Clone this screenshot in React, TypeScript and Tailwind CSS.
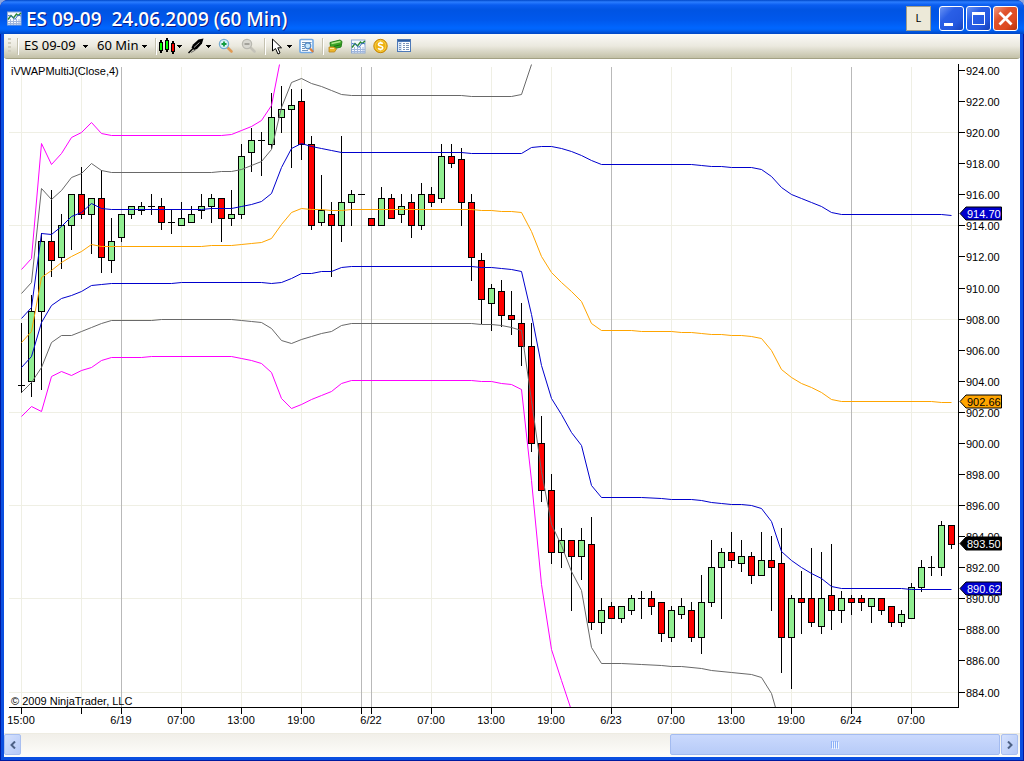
import type { ReactNode } from 'react'

type Kind = 'up' | 'down' | 'flat'
// high, body top, body bottom, low, all in plot coordinates
type Bar = [Kind, number, number, number, number]
type Point = [number, number]

const BARS: Bar[] = [
  ['flat', 323, 385, 385, 392],
  ['up', 295, 311, 381, 396],
  ['up', 233, 241, 311, 389],
  ['down', 190, 241, 260, 276],
  ['up', 214, 225, 257, 268],
  ['up', 194, 194, 225, 249],
  ['down', 167, 194, 214, 218],
  ['up', 198, 198, 214, 253],
  ['down', 170, 198, 257, 272],
  ['up', 218, 241, 260, 272],
  ['up', 214, 214, 237, 241],
  ['up', 206, 206, 214, 218],
  ['up', 202, 206, 210, 214],
  ['flat', 194, 206, 206, 214],
  ['down', 198, 206, 222, 229],
  ['flat', 209, 222, 222, 233],
  ['up', 202, 218, 225, 225],
  ['up', 206, 214, 222, 222],
  ['up', 194, 206, 210, 218],
  ['up', 194, 198, 206, 222],
  ['down', 198, 198, 218, 241],
  ['up', 190, 214, 218, 225],
  ['up', 144, 156, 214, 218],
  ['up', 128, 140, 152, 171],
  ['flat', 132, 140, 140, 175],
  ['up', 93, 117, 144, 148],
  ['up', 86, 109, 117, 132],
  ['up', 89, 105, 109, 167],
  ['down', 89, 101, 144, 159],
  ['down', 136, 144, 225, 229],
  ['up', 175, 210, 222, 225],
  ['down', 202, 214, 225, 276],
  ['up', 136, 202, 225, 241],
  ['up', 190, 194, 202, 225],
  ['flat', 194, 194, 194, 194],
  ['down', 218, 218, 225, 225],
  ['up', 187, 198, 225, 225],
  ['down', 194, 198, 218, 218],
  ['up', 194, 206, 214, 222],
  ['down', 194, 202, 225, 237],
  ['up', 183, 194, 225, 229],
  ['down', 187, 194, 202, 206],
  ['up', 144, 156, 198, 202],
  ['down', 144, 156, 163, 167],
  ['down', 148, 159, 202, 225],
  ['down', 194, 202, 257, 280],
  ['down', 253, 260, 299, 323],
  ['up', 284, 288, 303, 330],
  ['down', 280, 291, 315, 326],
  ['down', 291, 315, 319, 334],
  ['down', 303, 323, 346, 365],
  ['down', 323, 346, 443, 451],
  ['down', 416, 443, 490, 501],
  ['down', 474, 490, 552, 563],
  ['up', 528, 540, 552, 567],
  ['down', 540, 540, 556, 610],
  ['up', 528, 540, 556, 579],
  ['down', 517, 544, 622, 629],
  ['up', 598, 610, 622, 633],
  ['down', 602, 606, 618, 618],
  ['up', 606, 606, 618, 622],
  ['up', 595, 598, 610, 614],
  ['flat', 591, 598, 598, 618],
  ['down', 591, 598, 606, 614],
  ['down', 602, 602, 633, 641],
  ['up', 606, 610, 637, 641],
  ['up', 598, 606, 614, 618],
  ['down', 602, 610, 637, 641],
  ['up', 575, 602, 637, 653],
  ['up', 540, 567, 602, 606],
  ['up', 548, 552, 567, 618],
  ['down', 532, 552, 560, 567],
  ['up', 540, 556, 563, 571],
  ['down', 552, 556, 575, 583],
  ['up', 532, 560, 575, 575],
  ['down', 536, 560, 567, 610],
  ['down', 528, 563, 637, 672],
  ['up', 595, 598, 637, 688],
  ['down', 571, 598, 602, 633],
  ['down', 548, 598, 622, 626],
  ['up', 552, 598, 626, 633],
  ['down', 544, 595, 610, 629],
  ['up', 591, 598, 610, 622],
  ['down', 595, 598, 602, 614],
  ['down', 595, 598, 602, 610],
  ['up', 598, 598, 606, 622],
  ['down', 598, 598, 610, 614],
  ['down', 606, 606, 622, 626],
  ['up', 610, 614, 622, 626],
  ['up', 583, 587, 618, 618],
  ['up', 560, 567, 587, 591],
  ['flat', 556, 567, 567, 575],
  ['up', 521, 525, 567, 575],
  ['down', 525, 525, 544, 548],
]

const BANDS: { color: string; points: Point[] }[] = [
  {
    color: '#f0f',
    points: [
      [21, 269], [31, 258], [41, 143], [51, 164], [61, 153], [71, 137], [81, 132], [91, 122], [101, 133],
      [111, 135], [221, 135], [231, 134], [241, 130], [251, 126], [261, 120], [271, 105], [279, 64],
    ],
  },
  {
    color: '#696969',
    points: [
      [21, 293], [31, 282], [41, 188], [51, 199], [61, 190], [71, 177], [81, 173], [91, 163], [101, 170],
      [111, 172], [211, 172], [221, 171], [231, 171], [241, 169], [251, 165], [261, 161], [271, 149],
      [281, 107], [291, 82], [301, 78], [311, 83], [321, 86], [331, 90], [341, 94], [351, 95], [461, 95],
      [471, 96], [511, 96], [521, 94], [531, 64],
    ],
  },
  {
    color: '#0000cd',
    points: [
      [21, 318], [31, 307], [41, 233], [51, 234], [61, 226], [71, 216], [81, 212], [91, 203], [101, 208],
      [111, 209], [201, 209], [211, 208], [231, 208], [241, 206], [251, 204], [261, 201], [271, 193],
      [281, 167], [291, 148], [301, 143], [311, 146], [321, 148], [331, 150], [341, 152], [461, 152],
      [471, 153], [521, 153], [531, 147], [541, 146], [551, 146], [561, 148], [571, 151], [581, 155],
      [591, 160], [601, 164], [691, 164], [701, 165], [711, 166], [721, 166], [731, 167], [751, 167],
      [761, 169], [771, 176], [781, 187], [791, 194], [801, 198], [811, 202], [821, 206], [831, 212],
      [841, 214], [941, 214], [951, 215],
    ],
  },
  {
    color: '#ffa500',
    points: [
      [21, 342], [31, 331], [41, 277], [51, 270], [61, 262], [71, 256], [81, 251], [91, 244], [101, 246],
      [201, 246], [211, 245], [231, 245], [241, 244], [251, 243], [261, 242], [271, 238], [281, 224],
      [291, 212], [301, 208], [311, 209], [321, 209], [331, 210], [341, 210], [351, 209], [471, 209],
      [481, 210], [491, 210], [501, 211], [511, 211], [521, 212], [531, 231], [541, 256], [551, 272],
      [561, 282], [571, 291], [581, 301], [591, 323], [601, 330], [631, 330], [641, 331], [671, 331],
      [681, 332], [691, 332], [701, 333], [711, 334], [721, 334], [731, 335], [741, 335], [751, 336],
      [761, 338], [771, 350], [781, 369], [791, 377], [801, 383], [811, 387], [821, 392], [831, 399],
      [841, 401], [931, 401], [941, 402], [951, 402],
    ],
  },
  {
    color: '#0000cd',
    points: [
      [21, 367], [31, 356], [41, 322], [51, 305], [61, 298], [71, 295], [81, 291], [91, 285], [101, 284],
      [111, 283], [171, 283], [181, 282], [261, 282], [271, 283], [281, 282], [291, 278], [301, 273],
      [311, 273], [321, 271], [331, 271], [341, 267], [351, 266], [471, 266], [481, 267], [491, 267],
      [501, 268], [511, 269], [521, 271], [531, 314], [541, 365], [551, 398], [561, 414], [571, 432],
      [581, 445], [591, 485], [601, 497], [641, 497], [661, 498], [671, 499], [691, 499], [701, 500],
      [711, 502], [721, 503], [731, 504], [741, 504], [751, 505], [761, 508], [771, 521], [781, 551],
      [791, 560], [801, 567], [811, 573], [821, 578], [831, 586], [841, 588], [901, 588], [911, 589],
      [951, 589],
    ],
  },
  {
    color: '#696969',
    points: [
      [21, 392], [31, 382], [41, 367], [51, 342], [61, 335], [71, 335], [81, 331], [91, 327], [101, 323],
      [111, 320], [151, 320], [161, 319], [231, 319], [241, 320], [251, 321], [261, 322], [271, 328],
      [281, 340], [291, 343], [301, 339], [311, 336], [321, 333], [331, 331], [341, 325], [351, 323],
      [471, 323], [481, 324], [491, 324], [501, 325], [511, 327], [521, 330], [531, 400], [541, 471],
      [551, 524], [561, 545], [571, 571], [581, 590], [591, 647], [601, 663], [621, 663], [641, 664],
      [661, 665], [671, 666], [681, 666], [701, 668], [711, 670], [731, 672], [751, 674], [761, 677],
      [771, 693], [775, 707],
    ],
  },
  {
    color: '#f0f',
    points: [
      [21, 416], [31, 406], [41, 411], [51, 376], [61, 371], [71, 375], [81, 370], [91, 367], [101, 360],
      [111, 357], [141, 357], [151, 356], [231, 356], [241, 358], [251, 360], [261, 363], [271, 372],
      [281, 398], [291, 408], [301, 404], [311, 399], [321, 395], [331, 391], [341, 383], [351, 380],
      [471, 380], [481, 381], [491, 381], [501, 383], [511, 384], [521, 389], [531, 480], [541, 584],
      [551, 649], [561, 680], [570, 707],
    ],
  },
]

const TIME_TICKS: { x: number; label?: string; session?: boolean }[] = [
  { x: 21, label: '15:00' },
  { x: 81 },
  { x: 121, label: '6/19', session: true },
  { x: 181, label: '07:00' },
  { x: 241, label: '13:00' },
  { x: 301, label: '19:00' },
  { x: 361, session: true },
  { x: 371, label: '6/22', session: true },
  { x: 431, label: '07:00' },
  { x: 491, label: '13:00' },
  { x: 551, label: '19:00' },
  { x: 611, label: '6/23', session: true },
  { x: 671, label: '07:00' },
  { x: 731, label: '13:00' },
  { x: 791, label: '19:00' },
  { x: 851, label: '6/24', session: true },
  { x: 911, label: '07:00' },
]

const PRICE_TAGS = [
  { y: 213, label: '914.70', fill: '#0000cd', text: '#fff' },
  { y: 401, label: '902.66', fill: '#ffa500', text: '#000' },
  { y: 543, label: '893.50', fill: '#000', text: '#fff' },
  { y: 588, label: '890.62', fill: '#0000cd', text: '#fff' },
]

const PRICES = Array.from({ length: 21 }, (_, i) => 924 - i * 2)
const priceY = (price: number) => Math.floor(132.6 + (920 - price) * 15.54)

function Chart() {
  return (
    <svg
      viewBox="4 59 1016 674"
      className="block h-full w-full"
      fontFamily='"Liberation Sans", Arial, sans-serif'
      fontSize="11"
      role="img"
      aria-label="ES 09-09 60 minute chart"
    >
      {/* Grid */}
      <g shapeRendering="crispEdges">
        {[920, 914, 908, 902, 896, 890, 884].map((p) => (
          <rect key={p} x="9" y={priceY(p)} width="949" height="1" fill="#efefe4" />
        ))}
        {TIME_TICKS.map(({ x, session }) => (
          <rect key={x} x={x} y="67" width="1" height="640" fill={session ? '#b9b9b9' : '#efefe4'} />
        ))}
      </g>

      {/* Candles */}
      <g shapeRendering="crispEdges">
        {BARS.map(([kind, high, top, bottom, low], i) => {
          const x = 21 + i * 10
          return (
            <g key={x}>
              <rect x={x} y={high} width="1" height={low - high + 1} />
              <rect x={x - 3} y={top} width="7" height={bottom - top + 1} />
              {kind !== 'flat' && (
                <rect
                  x={x - 2}
                  y={top + 1}
                  width="5"
                  height={bottom - top - 1}
                  fill={kind === 'up' ? '#90ee90' : '#f00'}
                />
              )}
            </g>
          )
        })}
      </g>

      {/* VWAP bands */}
      {BANDS.map(({ color, points }, i) => (
        <polyline
          key={i}
          points={points.map(([x, y]) => `${x + 0.5},${y + 0.5}`).join(' ')}
          fill="none"
          stroke={color}
        />
      ))}

      {/* Axes */}
      <g shapeRendering="crispEdges">
        <rect x="958" y="64" width="1" height="644" />
        <rect x="9" y="707" width="950" height="1" />
        {PRICES.map((p) => (
          <rect key={p} x="959" y={priceY(p)} width="6" height="1" />
        ))}
        {TIME_TICKS.map(({ x }) => (
          <rect key={x} x={x} y="708" width="1" height="6" />
        ))}
      </g>
      {PRICES.map((p) => (
        <text key={p} x="966" y={priceY(p) + 5}>
          {p.toFixed(2)}
        </text>
      ))}
      {TIME_TICKS.map(({ x, label }) =>
        label ? (
          <text key={x} x={x} y="724" textAnchor="middle">
            {label}
          </text>
        ) : null
      )}

      {PRICE_TAGS.map(({ y, label, fill, text }) => (
        <g key={label}>
          <path d={`M960 ${y + 0.5}l6 -6.5h35.5v13h-35.5z`} fill={fill} stroke="#000" />
          <text x="967" y={y + 5} fill={text}>
            {label}
          </text>
        </g>
      ))}

      <text x="11" y="75">iVWAPMultiJ(Close,4)</text>
      <text x="11" y="705">© 2009 NinjaTrader, LLC</text>
    </svg>
  )
}

function Caret() {
  return (
    <svg viewBox="0 0 5 3" className="h-[3px] w-[5px] shrink-0" shapeRendering="crispEdges" aria-hidden="true">
      <path d="M0 0h5v1h-1v1h-1v1h-1v-1h-1v-1h-1z" />
    </svg>
  )
}

function Separator({ className }: { className: string }) {
  return <span className={`h-4 w-px shrink-0 bg-[#c5c2b0] shadow-[1px_1px_0_#fff] ${className}`} />
}

function ToolButton({ label, className, children }: { label: string; className: string; children: ReactNode }) {
  return (
    <button
      type="button"
      aria-label={label}
      title={label}
      className={`flex h-5 shrink-0 items-center justify-between whitespace-nowrap ${className}`}
    >
      {children}
    </button>
  )
}

function CandlesIcon() {
  return (
    <svg viewBox="0 0 16 16" className="size-4" shapeRendering="crispEdges">
      <path d="M1 2h2v13h-2zM7 0h2v14h-2zM13 3h2v13h-2z" />
      <path d="M0 4h4v9h-4zM6 2h4v10h-4zM12 5h4v9h-4z" />
      <path d="M1 5h2v7h-2zM7 3h2v8h-2z" fill="#0f0" />
      <path d="M13 6h2v7h-2z" fill="#f00" />
    </svg>
  )
}

function PenIcon() {
  return (
    <svg viewBox="0 0 16 16" className="size-4">
      <path d="M15.5 0.5 L10.5 1.5 L5 6.5 L3.5 9.5 L6 12 L9 11 L14 5.5 Z" />
      <path d="M0.5 15 L5 10.5" stroke="#000" strokeWidth="1.4" />
      <path d="M3 14.5 L7.5 12" stroke="#555" strokeWidth="0.8" />
      <path d="M6 9.5 L11.5 4.5" stroke="#bbb" strokeWidth="0.9" />
    </svg>
  )
}

function ZoomIcon({ disabled }: { disabled?: boolean }) {
  return (
    <svg viewBox="0 0 16 16" className="size-4">
      <path
        d="M9.5 9.5 L13.5 13.5"
        stroke={disabled ? '#c4c2b8' : '#e09a55'}
        strokeWidth="2.6"
        strokeLinecap="round"
      />
      <circle
        cx="6"
        cy="6"
        r="4.6"
        fill={disabled ? '#d8d7d0' : '#d9f0f6'}
        stroke={disabled ? '#b9b8b0' : '#75acd3'}
        strokeWidth="1.3"
      />
      <path
        d={disabled ? 'M3.5 6h5' : 'M3.5 6h5M6 3.5v5'}
        stroke={disabled ? '#a3a29b' : '#119b3f'}
        strokeWidth="1.8"
      />
    </svg>
  )
}

function CursorIcon() {
  return (
    <svg viewBox="0 0 11 17" className="h-[17px] w-[11px]">
      <path d="M0.5 1 V13 L3.5 10.5 L6 16 L8 15 L5.8 9.8 H9.5 Z" fill="#fff" stroke="#000" />
    </svg>
  )
}

function DataBoxIcon() {
  return (
    <svg viewBox="0 0 16 16" className="size-4">
      <rect x="1" y="1.5" width="13" height="13" rx="1" fill="#fff" stroke="#6fa8e6" strokeWidth="1.6" />
      <path d="M3 4.5h9.5M3 6.5h3M3 8.500h2M3 10.5h3M3 12.500h6" stroke="#7193bb" />
      <circle cx="8.8" cy="7.8" r="3" fill="#c9e7fb" stroke="#4f86c4" strokeWidth="1.2" />
      <path d="M11 10.5 L14.2 14" stroke="#d9803f" strokeWidth="2.2" />
    </svg>
  )
}

function OrderIcon() {
  return (
    <svg viewBox="0 0 16 16" className="size-4">
      <path d="M2 4.5 L12 2 L14 3.5 L13 9 L5 11 L2.5 8.500 Z" fill="#3aa526" stroke="#23801a" />
      <path d="M3.5 5.5 L12.5 3.5" stroke="#b4e88c" strokeWidth="1.4" />
      <path d="M5.5 8.5 L12.5 6.8" stroke="#1c6c14" />
      <path d="M1 9 H6 L8.500 11 L6.5 14 H1 Z" fill="#edb52d" stroke="#b98518" strokeWidth="0.8" />
      <path d="M2 10.5h4" stroke="#fff09a" />
    </svg>
  )
}

function IndicatorIcon() {
  return (
    <svg viewBox="0 0 15 15" className="size-[15px]">
      <rect x="0.5" y="1" width="13.5" height="13" fill="#f6f9ff" stroke="#8ea9d3" />
      <path d="M1 10.5h13M1 12.5h13M3.5 8v6M6.5 8v6M9.5 8v6M12 8v6" stroke="#a0b6dc" />
      <path d="M1 8.5 L4 4.5 L6.5 7 L9.5 3 L11 4.5 L14 2" fill="none" stroke="#28872f" strokeWidth="1.4" />
      <path d="M1 4.5 L5 5.5 L8 8.5 L11 4 L14 5" fill="none" stroke="#3b6fc4" />
    </svg>
  )
}

function CoinIcon() {
  return (
    <svg viewBox="0 0 16 16" className="size-4">
      <circle cx="7.5" cy="8" r="6.7" fill="#eeb211" stroke="#c68605" />
      <circle cx="7.5" cy="8" r="5.4" fill="none" stroke="#f9d75a" strokeWidth="0.7" />
      <path
        d="M9.8 5.8 C8.8 4.4 5.4 4.5 5.4 6.4 C5.4 8.5 9.8 7.5 9.8 9.7 C9.8 11.6 6.2 11.7 5.1 10.2 M7.5 3.6v1.5M7.5 11v1.5"
        fill="none"
        stroke="#fff"
        strokeWidth="1.6"
      />
    </svg>
  )
}

function PropertiesIcon() {
  return (
    <svg viewBox="0 0 16 16" className="size-4" shapeRendering="crispEdges">
      <rect x="1" y="1" width="14" height="13" fill="#4d79b8" />
      <rect x="2" y="4" width="12" height="9" fill="#fff" />
      <rect x="2" y="4" width="4" height="9" fill="#dbe8f9" />
      <path
        d="M3 5h2v1h-2zM3 7h2v1h-2zM3 9h2v1h-2zM3 11h2v1h-2zM7 5h2v1h-2zM7 7h2v1h-2zM7 9h2v1h-2zM7 11h2v1h-2zM10 5h3v1h-3zM10 7h3v1h-3zM10 9h3v1h-3zM10 11h3v1h-3z"
        fill="#7d95b8"
      />
      <path d="M2 2h12v1h-12z" fill="#2f5b9c" />
    </svg>
  )
}

function TitleBar() {
  const box = 'flex size-[25px] items-center justify-center rounded-[3px] border border-white'
  return (
    <header className="flex h-[34px] shrink-0 items-center bg-[linear-gradient(#0047c8_0,#2b7dff_2px,#0a5df0_5px,#0054e3_10px,#0058ec_20px,#0066ff_28px,#0062f5_30px,#0046c4_34px)] pt-[3px] pr-1.5 pl-[7px]">
      <IndicatorIcon />
      <h1 className="ml-1 flex-1 truncate font-['Open_Sans','Noto_Sans',sans-serif] text-[19px] leading-6 font-semibold whitespace-pre text-white [text-shadow:1px_1px_0_#0a1883]">
        ES 09-09  24.06.2009 (60 Min)
      </h1>
      <button
        type="button"
        className="mr-2 flex size-[25px] items-center justify-center border border-[#9f9c88] bg-[#ece9d8] font-['Noto_Sans',sans-serif] text-[11px] text-black"
      >
        L
      </button>
      <div className="flex gap-0.5">
        <button
          type="button"
          aria-label="Minimize"
          className={`${box} bg-[linear-gradient(135deg,#6a94f4,#2a5fe6_35%,#2458e0_70%,#1741b8)]`}
        >
          <svg viewBox="0 0 23 23" className="size-[23px]">
            <path d="M4 16h9v3h-9z" fill="#fff" />
          </svg>
        </button>
        <button
          type="button"
          aria-label="Maximize"
          className={`${box} bg-[linear-gradient(135deg,#6a94f4,#2a5fe6_35%,#2458e0_70%,#1741b8)]`}
        >
          <svg viewBox="0 0 23 23" className="size-[23px]">
            <path d="M5 5h13v13h-13zM6 8v9h11v-9z" fill="#fff" fillRule="evenodd" />
          </svg>
        </button>
        <button
          type="button"
          aria-label="Close"
          className={`${box} bg-[linear-gradient(135deg,#f0997f,#e0532d_35%,#dd4a20_70%,#b5330c)]`}
        >
          <svg viewBox="0 0 23 23" className="size-[23px]">
            <path d="M5.5 5.5 L17.5 17.5 M17.5 5.5 L5.5 17.5" stroke="#fff" strokeWidth="2.8" />
          </svg>
        </button>
      </div>
    </header>
  )
}

function Toolbar() {
  return (
    <div
      role="toolbar"
      aria-label="Chart"
      className="flex h-[25px] shrink-0 items-center rounded-b-[3px] border-b border-[#a3a184] bg-linear-to-b from-[#fbfaf7] via-[#ebe9df] to-[#c3c1a8] pl-1 font-['Noto_Sans',sans-serif] text-[13px] text-black"
    >
      <span className="h-4 w-[3px] shrink-0 bg-[repeating-linear-gradient(#cfccbd_0_2px,transparent_2px_4px)]" />
      <Separator className="ml-1.5" />
      <ToolButton label="Instrument" className="ml-1.5 w-[64px]">
        ES 09-09 <Caret />
      </ToolButton>
      <ToolButton label="Interval" className="ml-[9px] w-[50px]">
        60 Min <Caret />
      </ToolButton>
      <Separator className="ml-2" />
      <ToolButton label="Chart style" className="ml-[3px] w-[23px]">
        <CandlesIcon />
        <Caret />
      </ToolButton>
      <ToolButton label="Drawing tools" className="ml-1.5 w-[23px]">
        <PenIcon />
        <Caret />
      </ToolButton>
      <ToolButton label="Zoom in" className="ml-[7px]">
        <ZoomIcon />
      </ToolButton>
      <ToolButton label="Zoom out" className="ml-[7px]">
        <ZoomIcon disabled />
      </ToolButton>
      <Separator className="ml-[7px]" />
      <ToolButton label="Cursor" className="ml-[7px] w-5">
        <CursorIcon />
        <Caret />
      </ToolButton>
      <ToolButton label="Data box" className="ml-[7px]">
        <DataBoxIcon />
      </ToolButton>
      <Separator className="ml-[7px]" />
      <ToolButton label="Chart trader" className="ml-[5px]">
        <OrderIcon />
      </ToolButton>
      <ToolButton label="Indicators" className="ml-[7px]">
        <IndicatorIcon />
      </ToolButton>
      <ToolButton label="Strategies" className="ml-[7px]">
        <CoinIcon />
      </ToolButton>
      <ToolButton label="Properties" className="ml-[7px]">
        <PropertiesIcon />
      </ToolButton>
    </div>
  )
}

function ScrollBar() {
  const cap =
    'flex w-[17px] shrink-0 items-center justify-center rounded-[2px] border border-[#a9bff0] bg-linear-to-br from-[#d5e1fd] to-[#b5c9f7]'
  return (
    <div className="flex h-6 shrink-0 border-t border-[#eeece2] bg-linear-to-b from-[#f1efe9] to-[#fefefb] pr-0.5 pb-0.5">
      <button type="button" aria-label="Scroll left" className={cap}>
        <svg viewBox="0 0 6 8" className="h-2 w-1.5">
          <path d="M5 0.5 L1.5 4 L5 7.5" fill="none" stroke="#4d6185" strokeWidth="2" />
        </svg>
      </button>
      <div className="flex flex-1">
        <button
          type="button"
          aria-label="Scroll thumb"
          className="mr-px ml-[66.2%] flex flex-1 items-center justify-center gap-px rounded-[2px] border border-[#a3bbf0] bg-linear-to-b from-[#cad9fd] to-[#b7cbf8]"
        >
          {[0, 1, 2, 3].map((i) => (
            <span key={i} className="h-[7px] w-px bg-[#8cb0f8] shadow-[1px_1px_0_#eef4fe]" />
          ))}
        </button>
      </div>
      <button type="button" aria-label="Scroll right" className={cap}>
        <svg viewBox="0 0 6 8" className="h-2 w-1.5">
          <path d="M1 0.5 L4.5 4 L1 7.5" fill="none" stroke="#4d6185" strokeWidth="2" />
        </svg>
      </button>
    </div>
  )
}

export default function App() {
  return (
    <div className="h-screen bg-[#8ea6dd]">
      <main className="flex h-full flex-col overflow-hidden rounded-t-[8px] bg-[#0019a0]">
        <TitleBar />
        <div className="flex min-h-0 flex-1 px-px pb-px">
          <div className="flex min-w-0 flex-1 flex-col border-x-3 border-b-3 border-[#0b4fe0] bg-white">
            <Toolbar />
            <div className="min-h-0 flex-1">
              <Chart />
            </div>
            <ScrollBar />
          </div>
        </div>
      </main>
    </div>
  )
}
